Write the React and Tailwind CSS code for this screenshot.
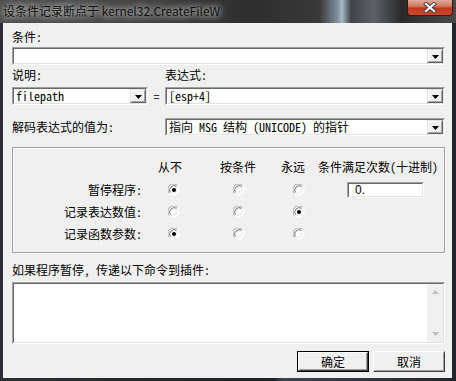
import React from 'react'

const sunken = 'border border-t-[#a0a0a0] border-l-[#a0a0a0] border-b-white border-r-white'
const sunkenIn = 'border border-t-[#696969] border-l-[#696969] border-b-[#e3e3e3] border-r-[#e3e3e3]'

function DropButton() {
  return (
    <div className="w-[16px] h-full shrink-0 bg-[#f0f0f0] border border-t-[#e3e3e3] border-l-[#e3e3e3] border-b-[#696969] border-r-[#696969]">
      <div className="w-full h-full flex items-center justify-center border border-t-white border-l-white border-b-[#a0a0a0] border-r-[#a0a0a0]">
        <svg width="7" height="4" className="mt-[1px]">
          <path d="M0 0h7L3.5 4z" fill="#000" />
        </svg>
      </div>
    </div>
  )
}

function Combo({ value, className = '' }) {
  return (
    <div className={`h-[18px] bg-white ${sunken} ${className}`}>
      <div className={`h-full flex ${sunkenIn}`}>
        <div className="flex-1 min-w-0 pl-[2px] text-[12px] leading-[14px] whitespace-nowrap">{value}</div>
        <DropButton />
      </div>
    </div>
  )
}

function Radio({ checked }) {
  return (
    <svg width="12" height="12" viewBox="0 0 12 12" className="shrink-0">
      <circle cx="6" cy="6" r="5" fill="#fff" />
      <path d="M1.5 9.5A5.5 5.5 0 0 1 9.5 1.5" fill="none" stroke="#a0a0a0" strokeWidth="1" />
      <path d="M9.5 1.5A5.5 5.5 0 0 1 1.5 9.5" fill="none" stroke="#fff" strokeWidth="1" />
      <path d="M2.4 8.6A4.5 4.5 0 0 1 8.6 2.4" fill="none" stroke="#696969" strokeWidth="1" />
      <path d="M8.6 2.4A4.5 4.5 0 0 1 2.4 8.6" fill="none" stroke="#e3e3e3" strokeWidth="1" />
      {checked && <circle cx="6" cy="6" r="2" fill="#000" />}
    </svg>
  )
}

function OptionRow({ label, checked, children }) {
  return (
    <div className="h-[22px] flex items-center">
      <div className="w-[129px] text-right leading-[14px]">{label}</div>
      <div className="ml-[26px]"><Radio checked={checked === 0} /></div>
      <div className="ml-[53px]"><Radio checked={checked === 1} /></div>
      <div className="ml-[48px]"><Radio checked={checked === 2} /></div>
      {children}
    </div>
  )
}

function DialogButton({ label, isDefault }) {
  return (
    <div className={`w-[72px] h-[21px] ${isDefault ? 'border border-black' : ''}`}>
      <div className="w-full h-full bg-[#f0f0f0] border border-t-white border-l-white border-b-[#404040] border-r-[#404040]">
        <div className="w-full h-full flex items-center justify-center border border-t-[#f0f0f0] border-l-[#f0f0f0] border-b-[#a0a0a0] border-r-[#a0a0a0] leading-[14px]">
          {label}
        </div>
      </div>
    </div>
  )
}

export default function App() {
  return (
    <div className="w-[456px] h-[381px] overflow-hidden flex flex-col bg-[linear-gradient(90deg,#2c3036,#1e2226_60%,#3a4450_62%,#22262b)]">
      {/* Title bar */}
      <div className="h-[23px] shrink-0 flex items-start justify-between bg-[linear-gradient(90deg,#4e4e4e_0%,#454545_30%,#2e2e2e_55%,#383838_70%,#7f8f9c_74%,#a9b7c2_75%,#3d4349_77%,#5c6268_82%,#2a2a2a_88%,#4a4a4a_100%)]">
        <div className="pl-[3px] pt-[3px] text-[12px] leading-[16px] text-[#111] font-['Noto_Sans_CJK_SC',sans-serif] [text-shadow:0_0_6px_rgba(255,255,255,0.9),0_0_10px_rgba(255,255,255,0.6)]">
          设条件记录断点于 kernel32.CreateFileW
        </div>
        <div className="w-[46px] h-[16px] mr-[3px] rounded-b-[4px] border border-t-0 border-[#3a1810] bg-[linear-gradient(180deg,#e2aa9c_0%,#d27a62_40%,#c2361c_55%,#c94a2e_100%)] flex items-center justify-center">
          <svg width="14" height="11" viewBox="0 0 14 11">
            <path d="M3 2l8 7M11 2l-8 7" stroke="#3b3b4e" strokeWidth="4" strokeLinecap="square" />
            <path d="M3 2l8 7M11 2l-8 7" stroke="#fff" strokeWidth="2.2" strokeLinecap="square" />
          </svg>
        </div>
      </div>

      {/* Client area */}
      <div className="ml-[3px] mr-[4px] mb-[3px] flex-1 bg-[#f0f0f0] pl-[9px] pr-[7px] pt-[7px] text-[12px] text-black font-['Noto_Sans_Mono_CJK_SC','Noto_Sans_CJK_SC',monospace]">
        <div className="leading-[14px]">条件:</div>
        <Combo className="mt-[3px]" value="" />

        <div className="mt-[3px] flex leading-[14px]">
          <div className="w-[153px]">说明:</div>
          <div>表达式:</div>
        </div>
        <div className="mt-[5px] flex items-center">
          <Combo className="w-[136px]" value="filepath" />
          <div className="w-[17px] text-center leading-[14px]">=</div>
          <Combo className="flex-1" value="[esp+4]" />
        </div>

        <div className="mt-[13px] flex items-center">
          <div className="w-[153px] leading-[14px]">解码表达式的值为:</div>
          <Combo className="flex-1" value="指向 MSG 结构 (UNICODE) 的指针" />
        </div>

        {/* Group box */}
        <div className="mt-[11px] h-[106px] border border-[#a0a0a0] shadow-[inset_1px_1px_0_#fff,1px_1px_0_#fff]">
          <div className="mt-[12px] flex leading-[14px]">
            <div className="ml-[145px] w-[24px] text-center">从不</div>
            <div className="ml-[38px] w-[36px] text-center">按条件</div>
            <div className="ml-[25px] w-[24px] text-center">永远</div>
            <div className="ml-[13px] whitespace-nowrap">条件满足次数(十进制)</div>
          </div>
          <div className="mt-[5px]">
            <OptionRow label="暂停程序:" checked={0}>
              <div className={`ml-[42px] w-[77px] h-[16px] bg-white ${sunken}`}>
                <div className={`h-full ${sunkenIn} pl-[6px] leading-[12px] font-['Liberation_Sans',sans-serif] text-[12px]`}>0.</div>
              </div>
            </OptionRow>
            <OptionRow label="记录表达数值:" checked={2} />
            <OptionRow label="记录函数参数:" checked={0} />
          </div>
        </div>

        <div className="mt-[10px] leading-[14px]">如果程序暂停, 传递以下命令到插件:</div>
        <div className={`mt-[5px] h-[62px] bg-white ${sunken}`}>
          <div className={`h-full flex justify-end ${sunkenIn}`}>
            <div className="w-[16px] h-full bg-[#f0f0f0] flex flex-col justify-between items-center py-[6px]">
              <svg width="7" height="4"><path d="M0 4h7L3.5 0z" fill="#c0c0c0" /></svg>
              <svg width="7" height="4"><path d="M0 0h7L3.5 4z" fill="#c0c0c0" /></svg>
            </div>
          </div>
        </div>

        <div className="mt-[7px] flex justify-end gap-[4px]">
          <DialogButton label="确定" isDefault />
          <DialogButton label="取消" />
        </div>
      </div>
    </div>
  )
}
